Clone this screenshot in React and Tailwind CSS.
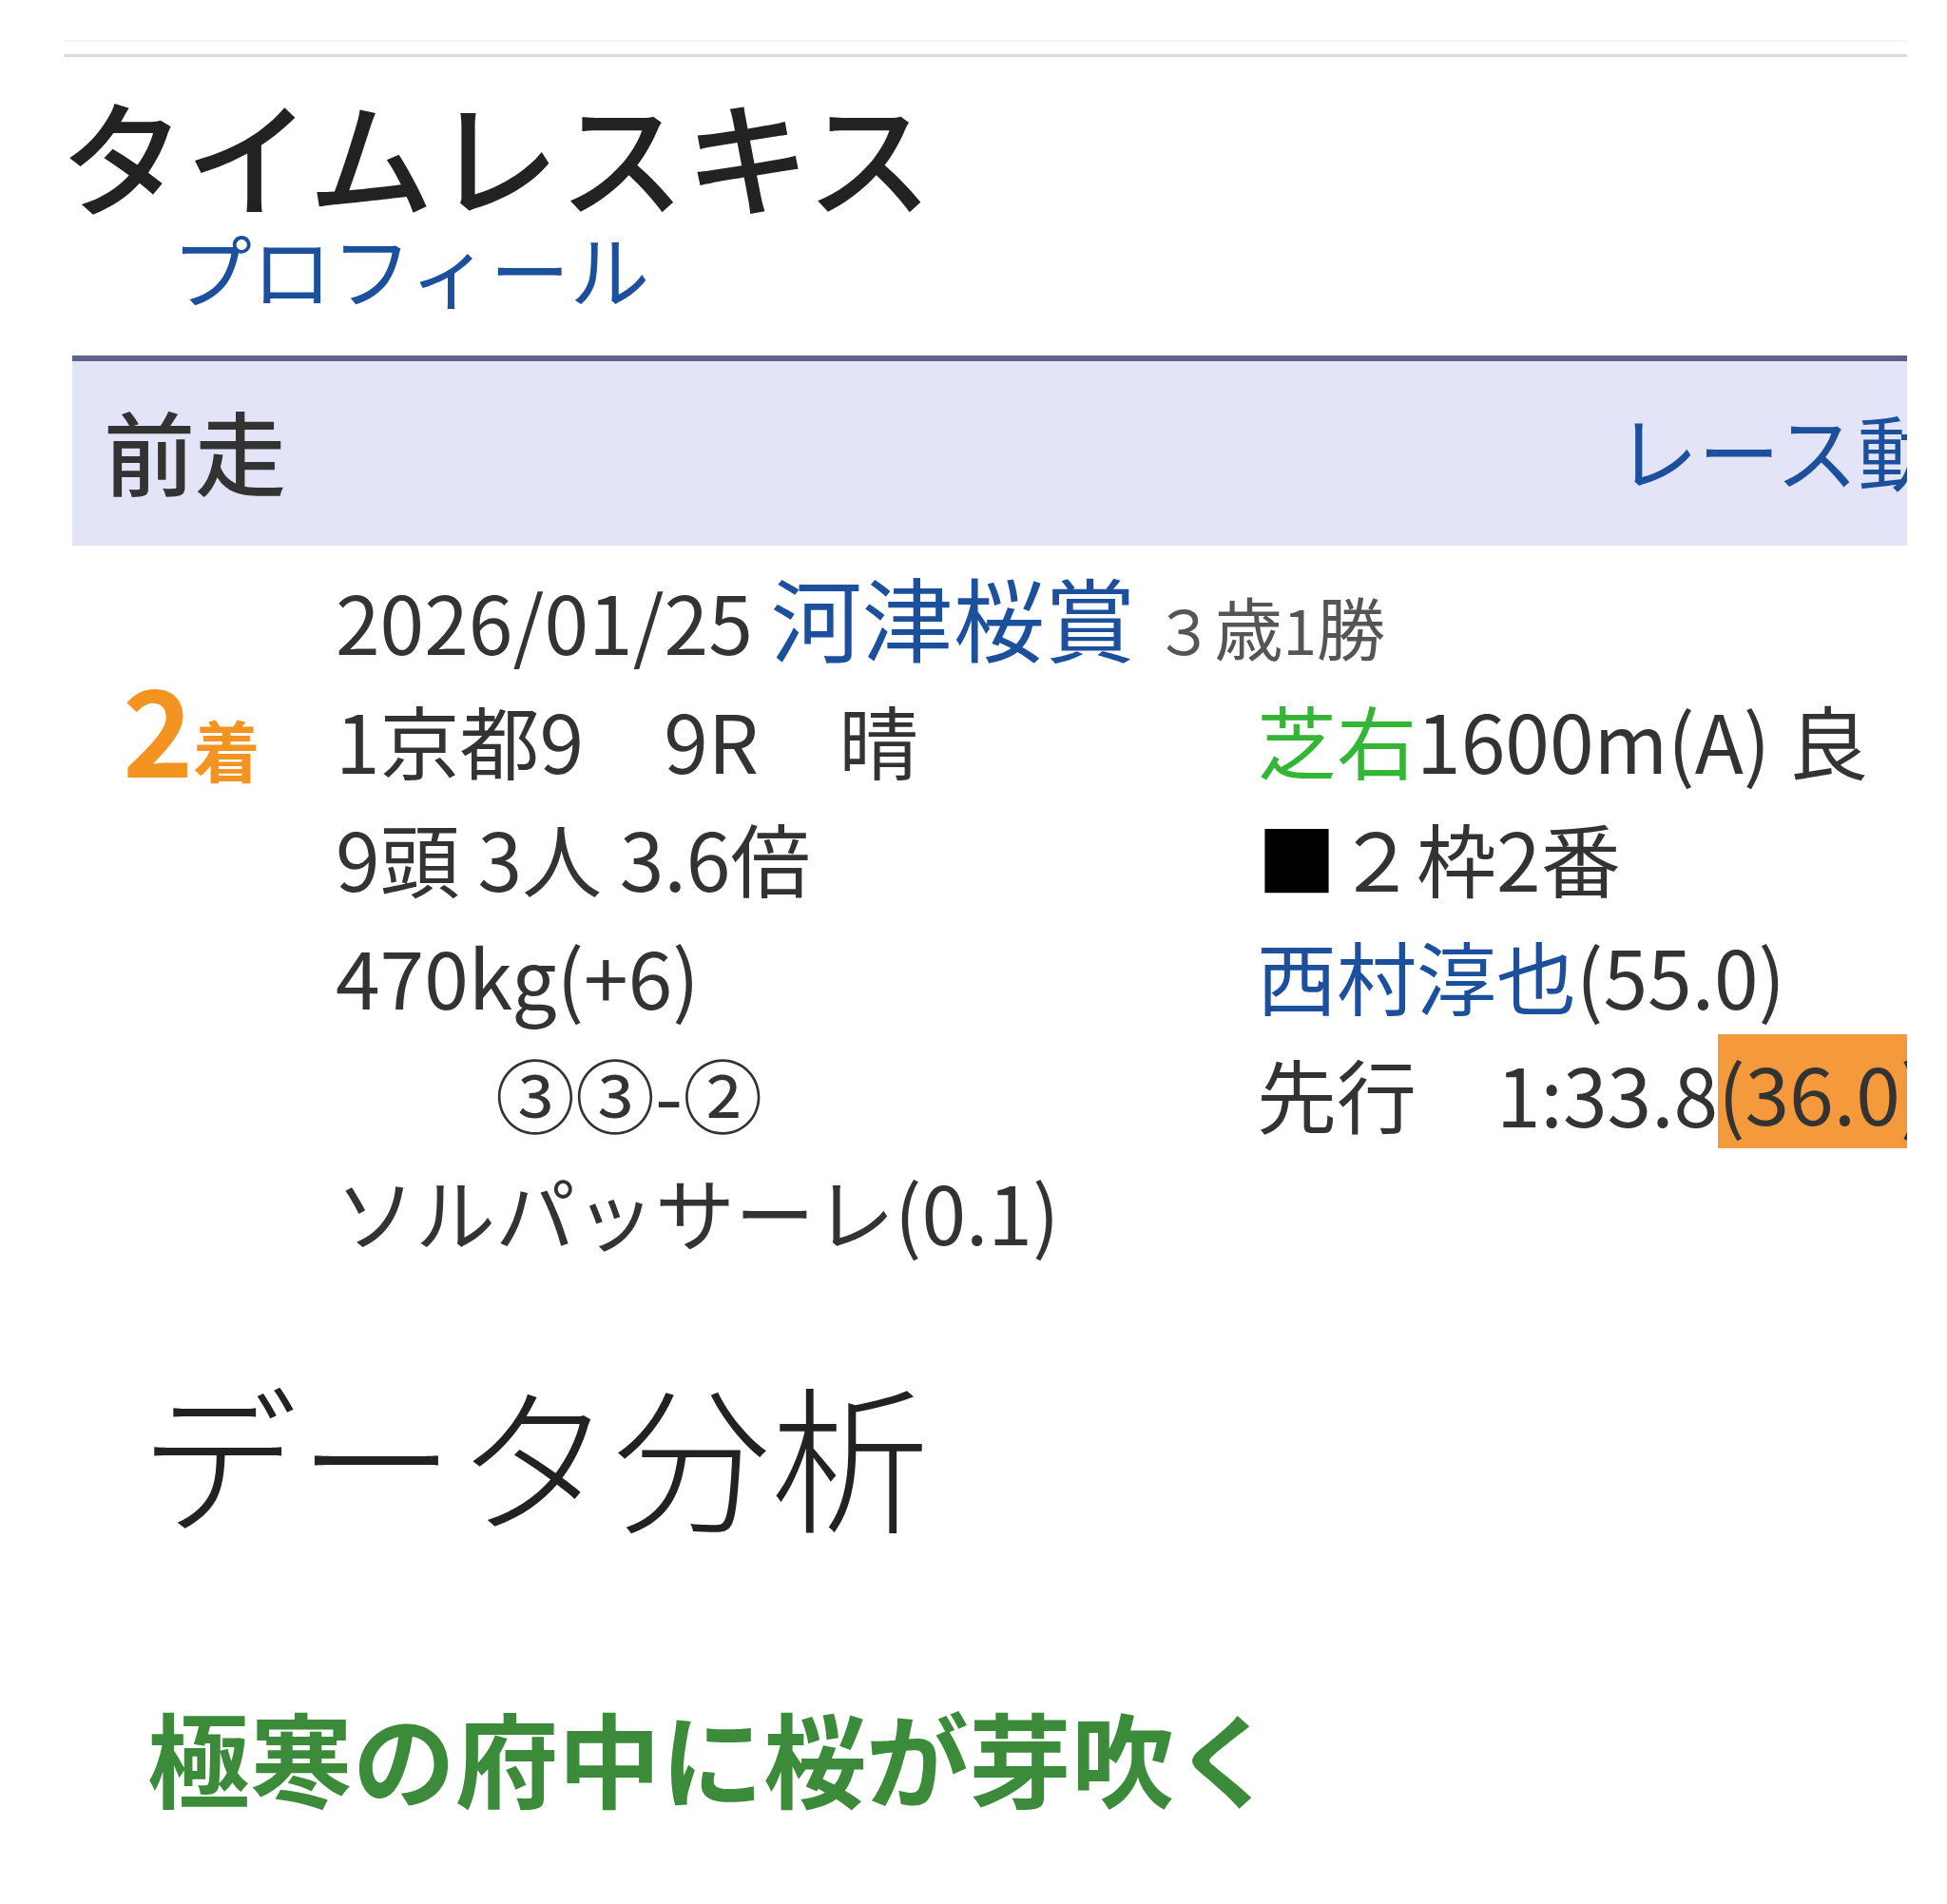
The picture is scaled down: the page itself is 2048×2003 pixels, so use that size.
export default function App() {
  const font = { fontFamily: '"Noto Sans CJK JP", "Noto Sans", sans-serif' }
  return (
    <div className="w-[2048px] h-[2003px] overflow-hidden bg-white text-[#333]" style={font}>
      <div className="ml-[67px] w-[1939px] pt-[42px] overflow-hidden">
        <div className="border-t-2 border-[#f5f5f5]" />
        <div className="mt-[13px] border-t-[3px] border-[#dcdcdc]" />

        {/* horse name */}
        <h1 className="mt-[26px] text-[132px] leading-[150px] font-medium text-[#222] -ml-[4px]">タイムレスキス</h1>
        <a className="block ml-[114px] -mt-[4px] text-[84px] leading-[100px] text-[#1c4f9c]">プロフィール</a>

        {/* last race header */}
        <div className="mt-[42px] ml-[9px] border-t-[6px] border-[#5f6290] bg-[#e3e4f7] h-[200px] flex items-center justify-between pl-[33px] pb-[8px] whitespace-nowrap">
          <span className="text-[96px] font-medium text-[#333] leading-none">前走</span>
          <span className="text-[86px] text-[#1c4f9c] leading-none -mr-[120px]">レース動画</span>
        </div>

        <div className="flex mt-[12px] text-[84px] leading-[124px] whitespace-nowrap">
          {/* finish */}
          <div className="w-[286px] shrink-0 pl-[62px] pt-[115px]">
            <div className="h-[124px] flex items-baseline text-[#f39322] font-bold">
              <span className="text-[126px] leading-[124px]">2</span>
              <span className="text-[70px]">着</span>
            </div>
          </div>

          <div className="flex-1">
            <div className="h-[130px]">
              2026/01/25 <span className="text-[96px] text-[#1c4f9c]">河津桜賞</span> <span className="text-[64px] text-[#555]">３<span className="text-[72px]">歳</span>1<span className="text-[72px]">勝</span></span>
            </div>
            <div className="grid grid-cols-[969px_1fr]">
              <div>
                <div className="h-[124px]">1京都9　9R　晴</div>
                <div className="h-[124px]">9頭 3人 3.6倍</div>
                <div className="h-[124px]">470kg(+6)</div>
                <div className="h-[124px]">　　③③-②</div>
                <div className="h-[124px]">ソルパッサーレ(0.1)</div>
              </div>
              <div>
                <div className="h-[124px]"><span className="text-[#35b535]">芝右</span>1600m(A) 良</div>
                <div className="h-[124px]"><span className="text-[#000]">■</span>２枠2番</div>
                <div className="h-[124px]"><span className="text-[#1c4f9c]">西村淳也</span>(55.0)</div>
                <div className="h-[124px]">先行　1:33.8<span className="inline-block bg-[#f59a3c] leading-[120px] align-[2px]">(36.0)</span></div>
              </div>
            </div>
          </div>
        </div>

        {/* analysis */}
        <h2 className="mt-[90px] ml-[80px] text-[166px] leading-[204px] font-light text-[#222]">データ分析</h2>
        <h3 className="mt-[152px] ml-[88px] text-[108px] leading-[130px] font-bold text-[#3b8b3b]">極寒の府中に桜が芽吹く</h3>
      </div>
    </div>
  )
}
